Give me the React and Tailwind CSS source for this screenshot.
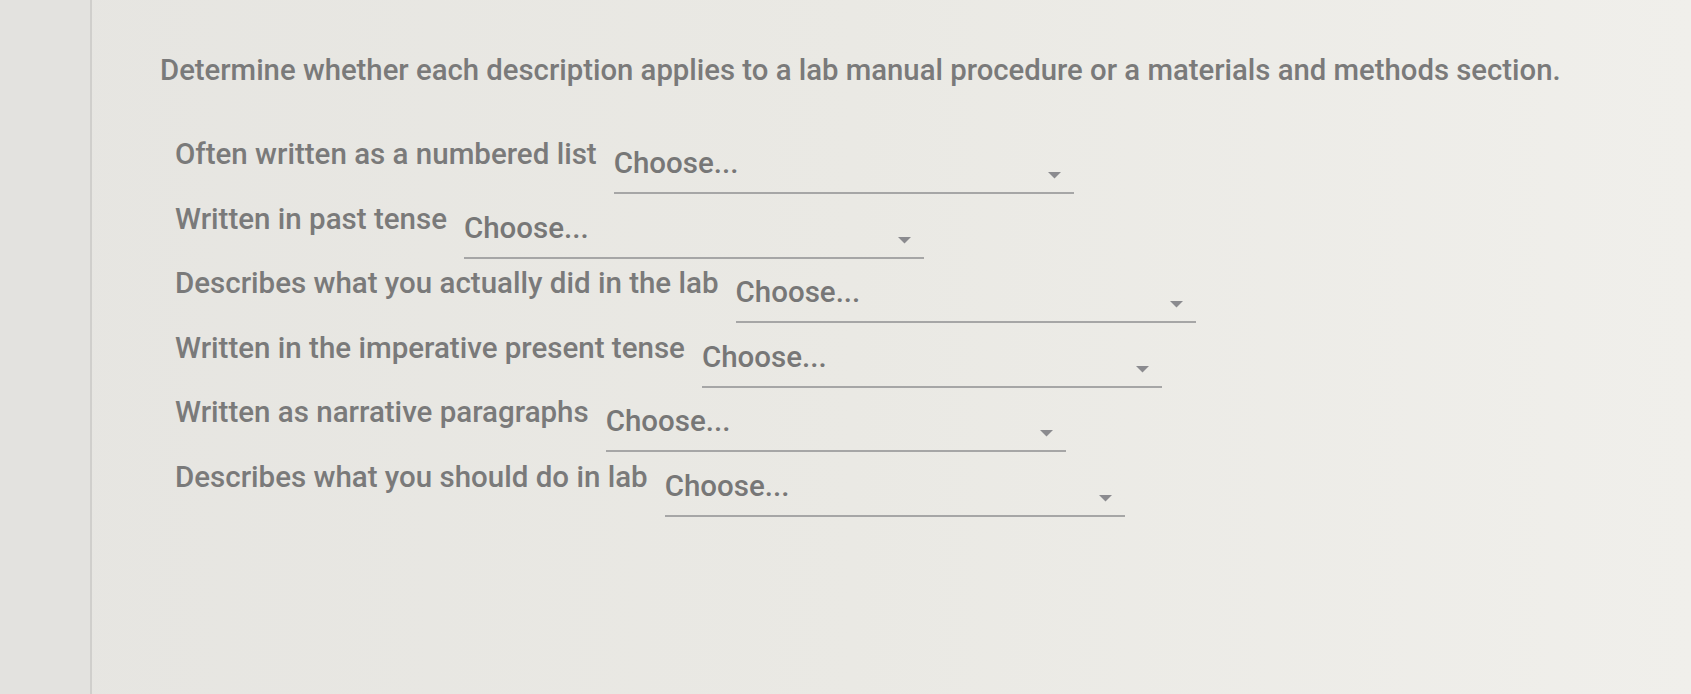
import React from "react";

const rows = [
  "Often written as a numbered list",
  "Written in past tense",
  "Describes what you actually did in the lab",
  "Written in the imperative present tense",
  "Written as narrative paragraphs",
  "Describes what you should do in lab",
];

function Select() {
  return (
    <div className="relative ml-[17px] h-[58px] w-[460px] shrink-0 border-b-2 border-[#a6a6a6] pt-[9px] leading-[36px] text-[#777777]">
      Choose...
      <svg
        className="absolute right-[12px] top-[35px]"
        width="15"
        height="8"
        viewBox="0 0 15 8"
      >
        <path d="M1 1 L14 1 L7.5 7.5 Z" fill="#8b8b8f" />
      </svg>
    </div>
  );
}

export default function App() {
  return (
    <div
      className="flex h-[694px] w-full bg-linear-to-r from-[#e6e5e1] via-[#eae9e4] to-[#f0efeb] text-[29.5px] font-medium"
      style={{ fontFamily: "Roboto, 'Liberation Sans', sans-serif" }}
    >
      <div className="h-full w-[92px] shrink-0 border-r-2 border-[#d0cfcc] bg-[#e3e2df]" />
      <div className="flex flex-col pl-[68px] pt-[52px]">
        <div className="text-[29.3px] leading-[36px] text-[#7a7a7a]">
          Determine whether each description applies to a lab manual procedure or a materials and methods section.
        </div>
        <div className="ml-[15px] mt-[48px] flex flex-col">
          {rows.map((r) => (
            <div key={r} className="flex h-[64.5px] items-start">
              <div className="whitespace-nowrap leading-[36px] text-[#7a7a7a]">{r}</div>
              <Select />
            </div>
          ))}
        </div>
      </div>
    </div>
  );
}
